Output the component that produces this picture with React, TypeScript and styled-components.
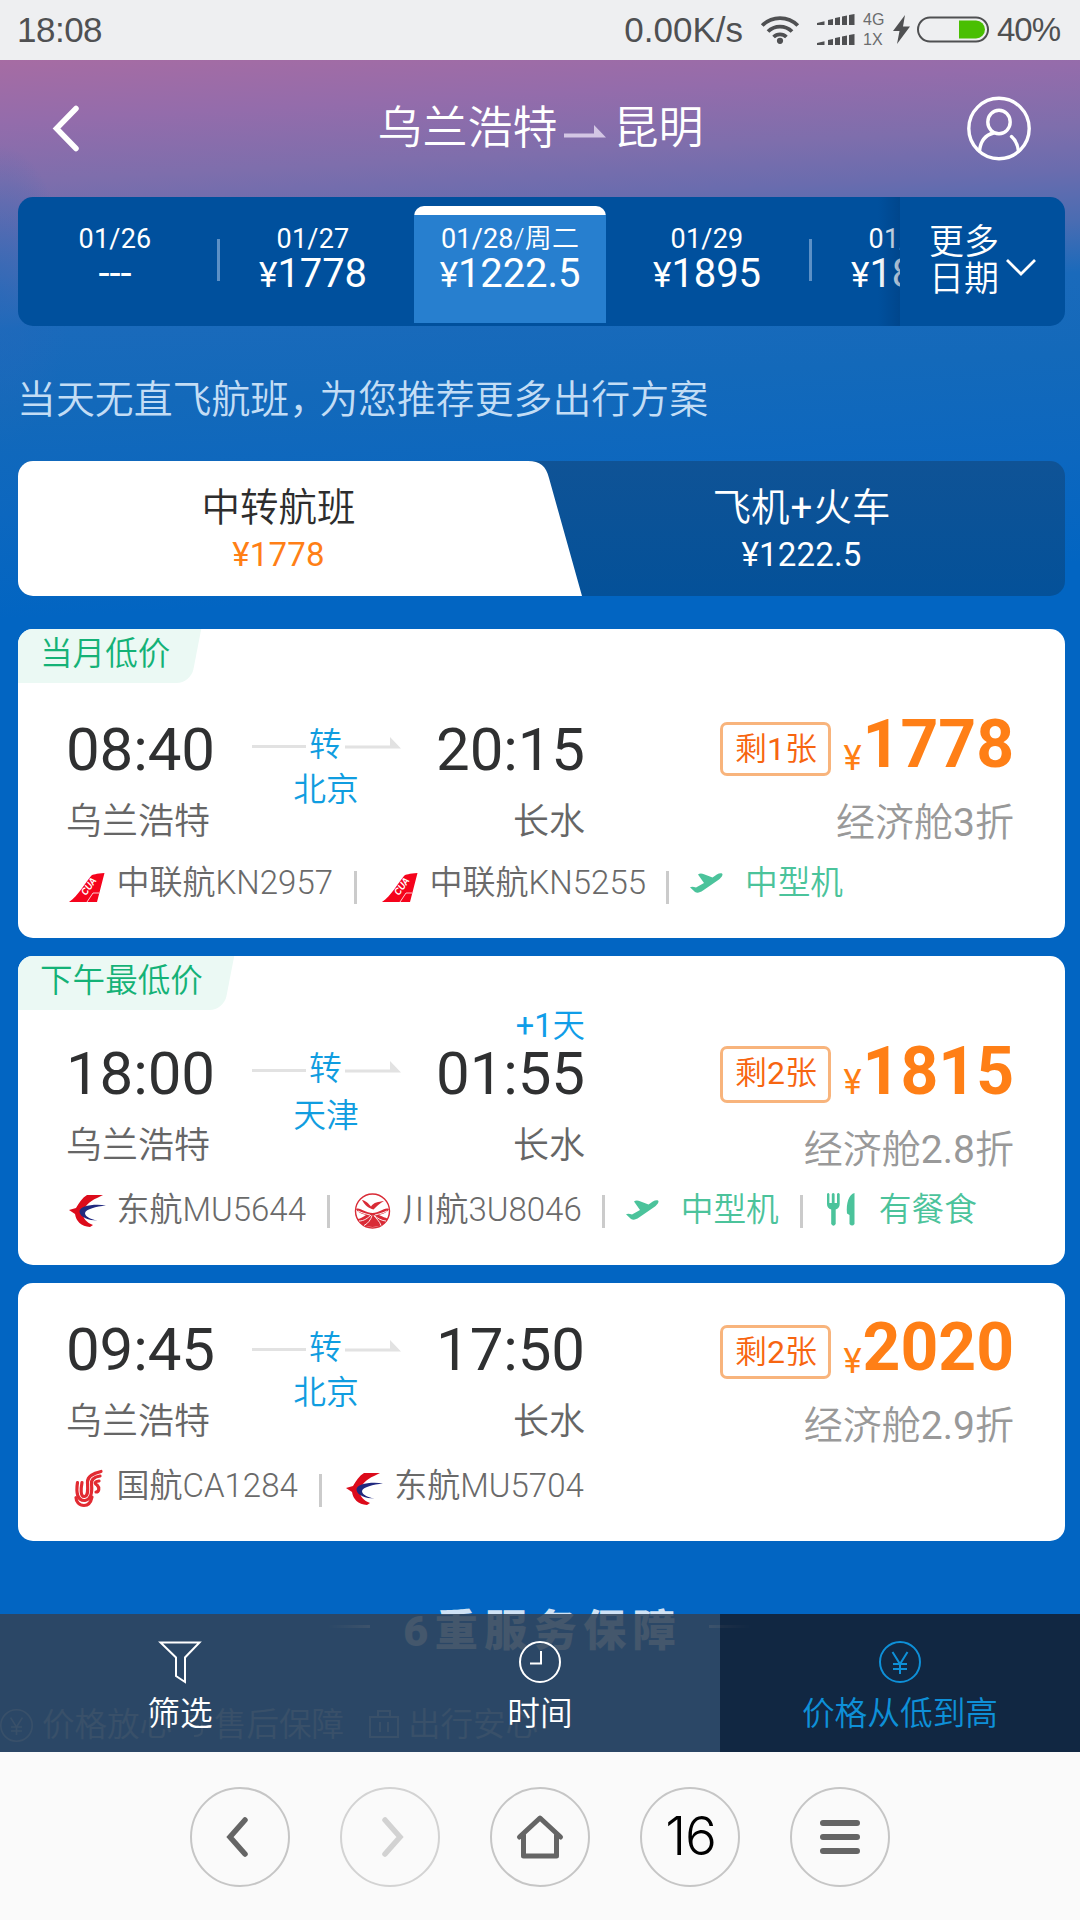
import React from 'react';
import styled, { createGlobalStyle } from 'styled-components';

const sans = `Roboto, "Noto Sans CJK SC", sans-serif`;

const GlobalStyle = createGlobalStyle`
  *, *::before, *::after { box-sizing: border-box; }
  body { margin: 0; font-family: ${sans}; background: #fafafa; }
  svg { display: block; flex: none; overflow: visible; }
`;

const Screen = styled.div`
  width: 1080px;
  height: 1920px;
  display: flex;
  flex-direction: column;
  overflow: hidden;
  white-space: nowrap;
`;

/* ---------- status bar ---------- */

const StatusBar = styled.div`
  height: 60px;
  flex: none;
  display: flex;
  align-items: center;
  padding: 0 19px 0 17px;
  background: #eeeff1;
  color: #4f5052;
  font: 35px/40px "Liberation Sans", sans-serif;
`;
const Clock = styled.span`
  flex: 1;
  letter-spacing: -0.5px;
`;
const Speed = styled.span`
  margin-right: 18px;
`;
const NetLabels = styled.div`
  width: 24px;
  margin: 0 6px 0 8px;
  font-size: 16px;
  line-height: 20px;
  color: #6b6c6e;
`;
const Percent = styled.span`
  width: 64px;
  margin-left: 8px;
  font-size: 33px;
  letter-spacing: -1px;
`;

/* ---------- page ---------- */

const Page = styled.main`
  position: relative;
  height: 1692px;
  flex: none;
  overflow: hidden;
  padding: 0 15px 0 18px;
  background:
    radial-gradient(ellipse 70px 150px at 0 235px, rgba(36, 104, 186, 0.6), rgba(36, 104, 186, 0)),
    linear-gradient(177deg, #a66ca3 0%, #946cab 3.5%, #7e6eac 7%, #6a6cae 9.5%, #4a6cb2 12.4%, #1a6abb 15.4%, #1369ba 20%, #0c67bf 26%, #0265c2 32%, #0265c2 100%);
`;

const Header = styled.header`
  height: 137px;
  display: flex;
  align-items: center;
  justify-content: space-between;
  padding: 0 34px;
`;
const Title = styled.h1`
  margin: 0 0 0 34px;
  display: flex;
  align-items: center;
  color: #fff;
  font-size: 45px;
  line-height: 60px;
  font-weight: 350;
`;
const TitleArrow = styled.svg`
  margin: 6px 8px 0 6px;
`;

const DateStrip = styled.nav`
  height: 129px;
  display: flex;
  border-radius: 15px;
  overflow: hidden;
  background: #00509d;
  color: #fff;
`;
const Days = styled.div`
  flex: 1;
  min-width: 0;
  display: flex;
  overflow: hidden;
  position: relative;
  &::after {
    content: '';
    position: absolute;
    inset: 0 0 0 auto;
    width: 22px;
    background: linear-gradient(90deg, rgba(0, 55, 115, 0), rgba(0, 55, 115, 0.4));
  }
`;
const Day = styled.div<{ $active?: boolean; $divider?: boolean }>`
  width: ${p => (p.$active ? 192 : 198)}px;
  height: ${p => (p.$active ? 117 : 129)}px;
  margin: ${p => (p.$active ? '9px 2px 0' : '0')};
  flex: none;
  display: flex;
  flex-direction: column;
  align-items: center;
  padding-top: ${p => (p.$active ? 18 : 27)}px;
  position: relative;
  &:first-child { margin-left: -2px; }
  ${p => p.$active && `
    background: linear-gradient(#fff 0 9px, #277fcf 9px);
    border-radius: 10px 10px 0 0;
  `}
  ${p => p.$divider && `
    &::after {
      content: '';
      position: absolute;
      right: -6px;
      top: 42px;
      width: 3px;
      height: 42px;
      background: #5c90c6;
    }
  `}
`;
const DayDate = styled.span`
  font-size: 27px;
  line-height: 31px;
  letter-spacing: 0.2px;
  font-weight: 350;
  span { font-weight: 400; }
`;
const DayPrice = styled.span`
  font-size: 40px;
  line-height: 38px;
  letter-spacing: -0.1px;
  small { font-size: 35px; }
`;
const MoreDates = styled.div`
  width: 165px;
  flex: none;
  display: flex;
  align-items: center;
  padding: 0 0 2px 29px;
  font-size: 35px;
  line-height: 37px;
  font-weight: 350;
  white-space: normal;
  span { width: 70px; }
  svg { margin: 14px 0 0 7px; }
`;

const Notice = styled.p`
  margin: 0 0 0 -1px;
  height: 135px;
  padding: 12px 0 0 0;
  line-height: 124px;
  font-size: 38.9px;
  font-weight: 350;
  color: #c3ddf5;
  span { letter-spacing: -9px; }
`;

const PlanTabs = styled.div`
  height: 135px;
  position: relative;
  display: flex;
  border-radius: 15px;
  overflow: hidden;
  background: linear-gradient(#0f5396, #045199);
  margin-bottom: 33px;
`;
const PlanShape = styled.svg`
  position: absolute;
  left: 0;
  top: 0;
`;
const PlanTab = styled.div<{ $active?: boolean }>`
  width: ${p => (p.$active ? 521 : 526)}px;
  position: relative;
  display: flex;
  flex-direction: column;
  align-items: center;
  padding-top: 23px;
  padding-right: ${p => (p.$active ? 0 : 1)}px;
  font-size: 38.5px;
  line-height: 48px;
  font-weight: 350;
  color: ${p => (p.$active ? '#2d2d2d' : '#fff')};
  i { font-style: normal; font-weight: 400; margin: 0 1px; }
  b {
    font-weight: 400;
    font-size: 33px;
    line-height: 45px;
    letter-spacing: 0.2px;
    color: ${p => (p.$active ? '#ff7f16' : '#fff')};
  }
`;

/* ---------- flight cards ---------- */

const Cards = styled.section`
  display: flex;
  flex-direction: column;
  gap: 18px;
`;
const Card = styled.article<{ $tagged: boolean }>`
  position: relative;
  height: ${p => (p.$tagged ? 309 : 258)}px;
  flex: none;
  padding: ${p => (p.$tagged ? 82 : 31)}px 51px 0 48px;
  border-radius: 15px;
  background: #fff;
  overflow: hidden;
`;
const Tag = styled.div`
  position: absolute;
  left: 0;
  top: 0;
  height: 54px;
  padding: 0 30px 0 22px;
  font-size: 32.6px;
  line-height: 50px;
  font-weight: 350;
  color: #14b277;
  &::before {
    content: '';
    position: absolute;
    inset: 0 4px 0 -20px;
    background: #ebf9f4;
    border-radius: 0 0 14px 0;
    transform: skewX(-11deg);
  }
  span { position: relative; }
`;
const Trip = styled.div`
  height: 152px;
  display: flex;
  align-items: flex-start;
`;
const Place = styled.div<{ $end?: boolean; $top: number }>`
  position: relative;
  width: ${p => (p.$end ? 184 : 186)}px;
  margin-top: ${p => p.$top}px;
  display: flex;
  flex-direction: column;
  align-items: ${p => (p.$end ? 'flex-end' : 'flex-start')};
  gap: 20px;
`;
const Time = styled.span`
  font-size: 60px;
  line-height: 60px;
  letter-spacing: -0.1px;
  color: #2f3031;
`;
const City = styled.span`
  font-size: 36px;
  line-height: 44px;
  font-weight: 350;
  color: #666;
`;
const NextDay = styled.span`
  position: absolute;
  right: 0;
  top: -38px;
  font-size: 32.5px;
  line-height: 40px;
  font-weight: 350;
  color: #109de8;
  span { font-weight: 400; }
`;
const Via = styled.div<{ $top: number; $gap: number }>`
  width: 149px;
  margin-top: ${p => p.$top}px;
  display: flex;
  flex-direction: column;
  align-items: center;
  gap: ${p => p.$gap}px;
  font-size: 32.8px;
  line-height: 36px;
  font-weight: 350;
  color: #109de0;
  > span { margin-left: -1px; }
`;
const ViaLine = styled.div`
  display: flex;
  align-items: flex-start;
  justify-content: space-between;
  width: 100%;
  &::before {
    content: '';
    width: 54px;
    height: 3px;
    margin-top: 18px;
    background: #e2e2e2;
  }
`;
const ViaHead = styled.svg`
  margin-top: 10px;
`;
const Fare = styled.div`
  flex: 1;
  display: flex;
  flex-direction: column;
  align-items: flex-end;
  gap: 23px;
`;
const FareLine = styled.div`
  height: 66px;
  display: flex;
  align-items: flex-start;
  color: #ff7f16;
`;
const Seats = styled.span<{ $top: number; $height: number }>`
  width: 111px;
  height: ${p => p.$height}px;
  margin: ${p => p.$top}px 12px 0 0;
  padding-top: 3px;
  border: 3px solid #f8b47c;
  border-radius: 7px;
  display: flex;
  justify-content: center;
  font-size: 32px;
  line-height: 42px;
  font-weight: 350;
  color: #f76510;
  b { font-weight: 400; }
`;
const Yen = styled.span<{ $top: number }>`
  margin: ${p => p.$top}px 1px 0 0;
  font-size: 34.5px;
  line-height: 34px;
`;
const Amount = styled.span`
  font-size: 66px;
  line-height: 68px;
  font-weight: 700;
`;
const Cabin = styled.span`
  font-size: 39px;
  line-height: 46px;
  font-weight: 350;
  color: #999;
  span { font-weight: 400; }
`;

const Legs = styled.div`
  height: 40px;
  display: flex;
  align-items: center;
  padding-left: 3px;
  font-size: 33px;
  line-height: 40px;
  font-weight: 350;
  color: #6a6a6a;
`;
const Leg = styled.span`
  display: flex;
  align-items: center;
`;
const LogoBox = styled.span<{ $drop: number }>`
  width: 37px;
  margin: ${p => p.$drop * 2}px 11px 0 -0.5px;
  display: flex;
  justify-content: center;
`;
const Feature = styled(Leg)<{ $gap: number }>`
  gap: ${p => p.$gap}px;
  font-size: 32.7px;
  color: #4bc39b;
`;
const Bar = styled.i<{ $before: number; $after: number; $drop: number }>`
  width: 3px;
  height: 33px;
  flex: none;
  margin: ${p => p.$drop}px ${p => p.$after}px 0 ${p => p.$before}px;
  background: #cbcbcb;
`;

/* ---------- promises below the list ---------- */

const Promises = styled.section`
  display: flex;
  flex-direction: column;
  align-items: center;
  padding-top: 65px;
  color: #cfe2f5;
`;
const PromiseTitle = styled.h2`
  margin: 0 0 0 -4px;
  display: flex;
  align-items: center;
  gap: 33px;
  font-size: 43px;
  line-height: 50px;
  font-weight: 900;
  letter-spacing: 6.5px;
  span { margin-right: -6.5px; }
  &::before, &::after {
    content: '';
    width: 42px;
    height: 3px;
    margin-top: -10px;
    background: linear-gradient(90deg, rgba(160, 200, 240, 0), rgba(160, 200, 240, 0.9));
  }
  &::after { transform: scaleX(-1); }
`;
const PromiseList = styled.div`
  align-self: flex-start;
  display: flex;
  align-items: center;
  margin: 47px 0 0 -18px;
  font-size: 32.5px;
  line-height: 44px;
  font-weight: 350;
  opacity: 0.55;
  svg { margin: 0 9px 0 0; }
  span { margin-right: 9px; }
  span + svg + span { margin-right: 25px; }
`;

/* ---------- sort bar ---------- */

const SortBar = styled.div`
  position: absolute;
  left: 0;
  right: 0;
  bottom: 0;
  height: 138px;
  display: flex;
`;
const SortItem = styled.div<{ $active?: boolean }>`
  flex: 1;
  display: flex;
  flex-direction: column;
  align-items: center;
  padding-top: 27px;
  gap: 10px;
  font-size: 32.7px;
  line-height: 42px;
  font-weight: 350;
  color: ${p => (p.$active ? '#0e90d8' : '#fff')};
  background: ${p => (p.$active ? 'rgba(19, 31, 50, 0.89)' : 'rgba(49, 67, 89, 0.88)')};
`;

/* ---------- browser toolbar ---------- */

const Toolbar = styled.footer`
  flex: 1;
  display: flex;
  justify-content: center;
  gap: 50px;
  padding-top: 35px;
  background: #fafafa;
  color: #656565;
`;
const RoundButton = styled.button<{ $dim?: boolean }>`
  width: 100px;
  height: 100px;
  padding: 0;
  display: grid;
  place-items: center;
  border: 2px solid ${p => (p.$dim ? '#d3d3d3' : '#c6c6c6')};
  border-radius: 50%;
  background: none;
  color: ${p => (p.$dim ? '#d2d2d2' : '#656565')};
`;
const PageCount = styled.span`
  font: 300 53px/60px Inter, sans-serif;
  letter-spacing: -1px;
  margin: -3px 0 0 1px;
  color: #000;
`;

/* ---------- drawings ---------- */

const WifiIcon = () => (
  <svg width="38" height="28" viewBox="0 0 38 28" fill="none" stroke="currentColor" strokeWidth="3.8">
    <path d="M1.2 9.5a25 25 0 0 1 35.6 0M7 15.5a17 17 0 0 1 24 0M12.6 21a9.2 9.2 0 0 1 12.8 0" />
    <circle cx="19" cy="24.8" r="3.1" fill="currentColor" stroke="none" />
  </svg>
);

const SignalBars = styled.svg`
  margin-left: 18px;
`;
const SignalIcon = () => {
  const row = (y: number) => (
    <path d={`M0 ${y + 11}v-2l7.500-1.800v3.800zM11 ${y + 11}v-5l5-1v6zM18 ${y + 11}v-7l5-1v8zM25 ${y + 11}v-8.500l5-1v9.500zM32 ${y + 11}v-10l5.500-1v11z`} />
  );
  return (
    <SignalBars width="38" height="32" viewBox="0 0 38 32" fill="currentColor">
      {row(0)}
      {row(20)}
    </SignalBars>
  );
};

const BatteryIcon = () => (
  <svg width="96" height="30" viewBox="0 0 96 30">
    <path d="M12 0 0 16h6.500L4 29 17 11.500h-7z" fill="#4f5052" />
    <rect x="25" y="2.500" width="70" height="24" rx="12" fill="none" stroke="#4f5052" strokeWidth="2" />
    <path d="M66 5.500h17a9 9 0 0 1 0 18H66z" fill="#49bf02" />
  </svg>
);

const BackIcon = () => (
  <svg width="28" height="46" viewBox="0 0 28 46" fill="none" stroke="#fff" strokeWidth="5.500" strokeLinecap="round">
    <path d="M24 2.500 4.500 22.500l19.500 20" />
  </svg>
);

const ProfileIcon = () => (
  <svg width="64" height="64" viewBox="0 0 64 64" fill="none" stroke="#fff" strokeWidth="3.400" strokeLinecap="round">
    <circle cx="32" cy="31.500" r="30.200" />
    <ellipse cx="32" cy="25" rx="11.200" ry="11.800" />
    <path d="M12.500 54c1-10 6-16 14-18M44.500 39.500c4 3.500 6.300 8.500 7 14.500" />
  </svg>
);

const CuaLogo = () => (
  <svg width="36" height="30" viewBox="0 0 36 30">
    <path d="M0 29C9 23 16 10 22 3c2-2 5-2 13.500-3L28 29z" fill="#f5031c" />
    <path d="M18 29 24 20h6" fill="none" stroke="#fff" strokeWidth="0.800" />
    <text x="0" y="0" transform="translate(17 23) rotate(-55)" fill="#fff" fontFamily="Liberation Sans, sans-serif" fontSize="10" fontWeight="700" fontStyle="italic" textLength="19" lengthAdjust="spacingAndGlyphs">CUA</text>
  </svg>
);

const EasternLogo = () => (
  <svg width="37" height="32" viewBox="0 0 37 32">
    <path d="M34 0H18C13 3 10 8 7 13L0 15l6 4c1 7 6 12.500 15 13l3-2C18 28 13 23 14 17c0-1 .5-2 1-2.500C18 7 26 4 34 0z" fill="#dc0b1b" />
    <path d="M37 10.500C25 8.500 10 11 10.500 17c1 5.500 9 8.500 18 8.500C21 24 16 21.500 16 18c1-4 11-6.500 21-7.500z" fill="#20297f" />
  </svg>
);

const SichuanLogo = () => (
  <svg width="37" height="36" viewBox="0 0 37 36" fill="none" stroke="#d92b36">
    <circle cx="18.500" cy="18" r="17" strokeWidth="1.400" />
    <path d="M8 7c3 0 7 4 9 6.500C20 9 24 9 30 8c-4 2-7 5-10.500 8.500C15 15 11 13 8 7z" fill="#d92b36" stroke="none" />
    <path d="M2 16c4-2 9 4 16.500 4S30 14 35 16c-1 3-6 5-10 6 4 2 8 3 9 4-3 5-8 8-15.500 8S6 31 3 26c3 0 6-2 9-4-4-1-9-3-10-6z" fill="#d92b36" stroke="none" />
    <path d="M4 18c4 2 8 3 12 4M5 28c5 0 9-3 12-6M10 32.500c4-2 7-6 8-10M27 32.500c-1-4-5-7-7-10M32 28c-4 0-9-3-12-5.500M33 18c-4 2-8 3-12 4" stroke="#fff" strokeWidth="0.900" />
  </svg>
);

const AirChinaLogo = () => (
  <svg width="31" height="38" viewBox="0 0 31 38" fill="none" stroke="#e22b32" strokeWidth="3.200" strokeLinecap="round">
    <path d="M29 1.500C21 3.500 15.500 6 15.500 12c0 5 1.500 14-3 14.500C8 27 9 18 10 12.500" />
    <path d="M28 6c-6 1-9 3-8.500 8 .5 5 1.500 15-6.500 16.500C5 31 4 22 5.500 12.500" />
    <path d="M27 11c-4 .5-5 2-2 4 3 3 2 7-1 7" />
    <path d="M20 27c-1 5-4 8.500-8 8.500-5 0-8-4-8-8" />
  </svg>
);

const PlaneIcon = () => (
  <svg width="33" height="20" viewBox="0 0 33 20" fill="#4bc39b">
    <path d="M0 14.300c1.500-1 3.500-.8 6 .3l8-4.600L8 1.500C9.500 0 12 .2 14 1.200l8.500 3.300C26 2 29-.4 32 .4c1.500 1-.5 4-3 6L13 17.500C10 19.500 7.500 20.300 5 19z" />
  </svg>
);

const MealIcon = () => (
  <svg width="28" height="35" viewBox="0 0 28 35" fill="#4bc39b">
    <path d="M0 1q1.200-2 2.400 0v9h2.400V1Q6.200-1 7.600 1v9H10V1q1.300-2 2.700 0v10c0 3-1.500 4.500-4 5.500V31q-2.200 3.500-4.500 0V16.500C1.500 15.500 0 14 0 11zM27.500 0v31q-2.300 3-5 0v-9L20 20.500C19 10 22 1 27.500 0z" />
  </svg>
);

const FilterIcon = () => (
  <svg width="42" height="42" viewBox="0 0 42 42" fill="none" stroke="currentColor" strokeWidth="2">
    <path d="M1.500 1.500h39L26 16.500V41l-9-6V16.500z" />
  </svg>
);
const TimeIcon = () => (
  <svg width="42" height="42" viewBox="0 0 42 42" fill="none" stroke="currentColor" strokeWidth="2">
    <circle cx="21" cy="21" r="20" />
    <path d="M22 10v12.500H11" />
  </svg>
);
const YenIcon = ({ size = 42 }: { size?: number }) => (
  <svg width={size} height={size} viewBox="0 0 42 42" fill="none" stroke="currentColor" strokeWidth="2">
    <circle cx="21" cy="21" r="20" />
    <path d="m13.500 11 7.500 12 7.500-12M21 23v10M14 23h14M14 28h14" />
  </svg>
);

/* ---------- data ---------- */

type TripInfo = {
  tag?: string;
  depart: string;
  arrive: string;
  nextDay?: [string, string];
  via: string;
  seats: number;
  price: string;
  cabin: [string, string, string];
  legs: { logo: React.ReactNode; drop: number; name: string }[];
  plane?: string;
  meal?: string;
};

const trips: TripInfo[] = [
  {
    tag: '当月低价', depart: '08:40', arrive: '20:15', via: '北京', seats: 1, price: '1778',
    cabin: ['经济舱', '3', '折'],
    legs: [{ logo: <CuaLogo />, drop: 5, name: '中联航KN2957' }, { logo: <CuaLogo />, drop: 5, name: '中联航KN5255' }],
    plane: '中型机',
  },
  {
    tag: '下午最低价', depart: '18:00', arrive: '01:55', nextDay: ['+1', '天'], via: '天津', seats: 2, price: '1815',
    cabin: ['经济舱', '2.8', '折'],
    legs: [{ logo: <EasternLogo />, drop: 1, name: '东航MU5644' }, { logo: <SichuanLogo />, drop: 1, name: '川航3U8046' }],
    plane: '中型机', meal: '有餐食',
  },
  {
    depart: '09:45', arrive: '17:50', via: '北京', seats: 2, price: '2020',
    cabin: ['经济舱', '2.9', '折'],
    legs: [{ logo: <AirChinaLogo />, drop: 3, name: '国航CA1284' }, { logo: <EasternLogo />, drop: 3, name: '东航MU5704' }],
  },
];

const days = [
  { date: '01/26', price: '---', divider: true },
  { date: '01/27', price: '1778' },
  { date: '01/28', week: '/周二', price: '1222.5', active: true },
  { date: '01/29', price: '1895', divider: true },
  { date: '01/30', price: '1895' },
];

function TripCard({ trip }: { trip: TripInfo }) {
  const tagged = Boolean(trip.tag);
  const lift = trip.nextDay ? 3 : 0;
  const barDrop = 9 - lift * 2;
  return (
    <Card $tagged={tagged}>
      {trip.tag && <Tag><span>{trip.tag}</span></Tag>}
      <Trip>
        <Place $top={(tagged ? 9 : 6) - lift}>
          <Time>{trip.depart}</Time>
          <City>乌兰浩特</City>
        </Place>
        <Via $top={16 - lift} $gap={trip.nextDay ? 11 : 9}>
          <ViaLine>
            转
            <ViaHead width="56" height="12" viewBox="0 0 56 12" fill="#e2e2e2">
              <path d="M0 8.500h45V0l11 11.500H0z" />
            </ViaHead>
          </ViaLine>
          <span>{trip.via}</span>
        </Via>
        <Place $end $top={(tagged ? 9 : 6) - lift}>
          {trip.nextDay && <NextDay><span>{trip.nextDay[0]}</span>{trip.nextDay[1]}</NextDay>}
          <Time>{trip.arrive}</Time>
          <City>长水</City>
        </Place>
        <Fare>
          <FareLine>
            <Seats $top={11 - lift} $height={54 + lift}>剩<b>{trip.seats}</b>张</Seats>
            <Yen $top={30 - lift}>¥</Yen>
            <Amount>{trip.price}</Amount>
          </FareLine>
          <Cabin>{trip.cabin[0]}<span>{trip.cabin[1]}</span>{trip.cabin[2]}</Cabin>
        </Fare>
      </Trip>
      <Legs>
        {trip.legs.map((leg, i) => (
          <React.Fragment key={leg.name}>
            {i > 0 && <Bar $before={21} $after={25} $drop={barDrop} />}
            <Leg><LogoBox $drop={leg.drop}>{leg.logo}</LogoBox>{leg.name}</Leg>
          </React.Fragment>
        ))}
        {trip.plane && (
          <>
            <Bar $before={20} $after={21} $drop={barDrop} />
            <Feature $gap={22}><PlaneIcon />{trip.plane}</Feature>
          </>
        )}
        {trip.meal && (
          <>
            <Bar $before={21} $after={24} $drop={barDrop} />
            <Feature $gap={24}><MealIcon />{trip.meal}</Feature>
          </>
        )}
      </Legs>
    </Card>
  );
}

export default function App() {
  return (
    <Screen>
      <GlobalStyle />
      <StatusBar>
        <Clock>18:08</Clock>
        <Speed>0.00K/s</Speed>
        <WifiIcon />
        <SignalIcon />
        <NetLabels>4G<br />1X</NetLabels>
        <BatteryIcon />
        <Percent>40%</Percent>
      </StatusBar>

      <Page>
        <Header>
          <BackIcon />
          <Title>
            乌兰浩特
            <TitleArrow width="42" height="13" viewBox="0 0 42 13" fill="#d3c6e4">
              <path d="M0 8.500h30V0l12 12.500H0z" />
            </TitleArrow>
            昆明
          </Title>
          <ProfileIcon />
        </Header>

        <DateStrip>
          <Days>
            {days.map(d => (
              <Day key={d.date} $active={d.active} $divider={d.divider}>
                <DayDate><span>{d.date}</span>{d.week}</DayDate>
                <DayPrice>{d.price !== '---' && <small>¥</small>}{d.price}</DayPrice>
              </Day>
            ))}
          </Days>
          <MoreDates>
            <span>更多<br />日期</span>
            <svg width="30" height="18" viewBox="0 0 30 18" fill="none" stroke="#fff" strokeWidth="2.800">
              <path d="m1 1 14 14L29 1" />
            </svg>
          </MoreDates>
        </DateStrip>

        <Notice>当天无直飞航班<span>，</span>为您推荐更多出行方案</Notice>

        <PlanTabs>
          <PlanShape width="566" height="135" viewBox="0 0 566 135" fill="#fff">
            <path d="M0 0h510c12 0 18 5 21 17l33 118H0z" />
          </PlanShape>
          <PlanTab $active>中转航班<b>¥1778</b></PlanTab>
          <PlanTab><span>飞机<i>+</i>火车</span><b>¥1222.5</b></PlanTab>
        </PlanTabs>

        <Cards>
          {trips.map(trip => <TripCard key={trip.price} trip={trip} />)}
        </Cards>

        <Promises>
          <PromiseTitle><span>6重服务保障</span></PromiseTitle>
          <PromiseList>
            <YenIcon size={33} />
            <span>价格放心</span>
            <svg width="24" height="28" viewBox="0 0 24 28" fill="none" stroke="currentColor" strokeWidth="2">
              <path d="M3 14a9 9 0 0 1 18 0v6c0 3-3 5-8 5" />
            </svg>
            <span>售后保障</span>
            <svg width="30" height="30" viewBox="0 0 30 30" fill="none" stroke="currentColor" strokeWidth="2">
              <path d="M1 7h28v20H1zM9 7V1h12v6M11 12v10M19 12v10" />
            </svg>
            <span>出行安心</span>
          </PromiseList>
        </Promises>

        <SortBar>
          <SortItem><FilterIcon />筛选</SortItem>
          <SortItem><TimeIcon />时间</SortItem>
          <SortItem $active><YenIcon />价格从低到高</SortItem>
        </SortBar>
      </Page>

      <Toolbar>
        <RoundButton>
          <svg width="22" height="42" viewBox="0 0 22 42" fill="none" stroke="currentColor" strokeWidth="5.500" strokeLinecap="round">
            <path d="M16 4 1 21l15 17" />
          </svg>
        </RoundButton>
        <RoundButton $dim>
          <svg width="22" height="42" viewBox="0 0 22 42" fill="none" stroke="currentColor" strokeWidth="5.500" strokeLinecap="round">
            <path d="m6 4 15 17L6 38" />
          </svg>
        </RoundButton>
        <RoundButton>
          <svg width="46" height="44" viewBox="0 0 46 44" fill="none" stroke="currentColor" strokeWidth="5" strokeLinecap="round" strokeLinejoin="round">
            <path d="M2.500 22 23 3l20.500 19M6.500 20v21h33V20" />
          </svg>
        </RoundButton>
        <RoundButton><PageCount>16</PageCount></RoundButton>
        <RoundButton>
          <svg width="40" height="36" viewBox="0 0 40 36" fill="none" stroke="currentColor" strokeWidth="6" strokeLinecap="round">
            <path d="M3 4h34M3 18h34M3 32h34" />
          </svg>
        </RoundButton>
      </Toolbar>
    </Screen>
  );
}
